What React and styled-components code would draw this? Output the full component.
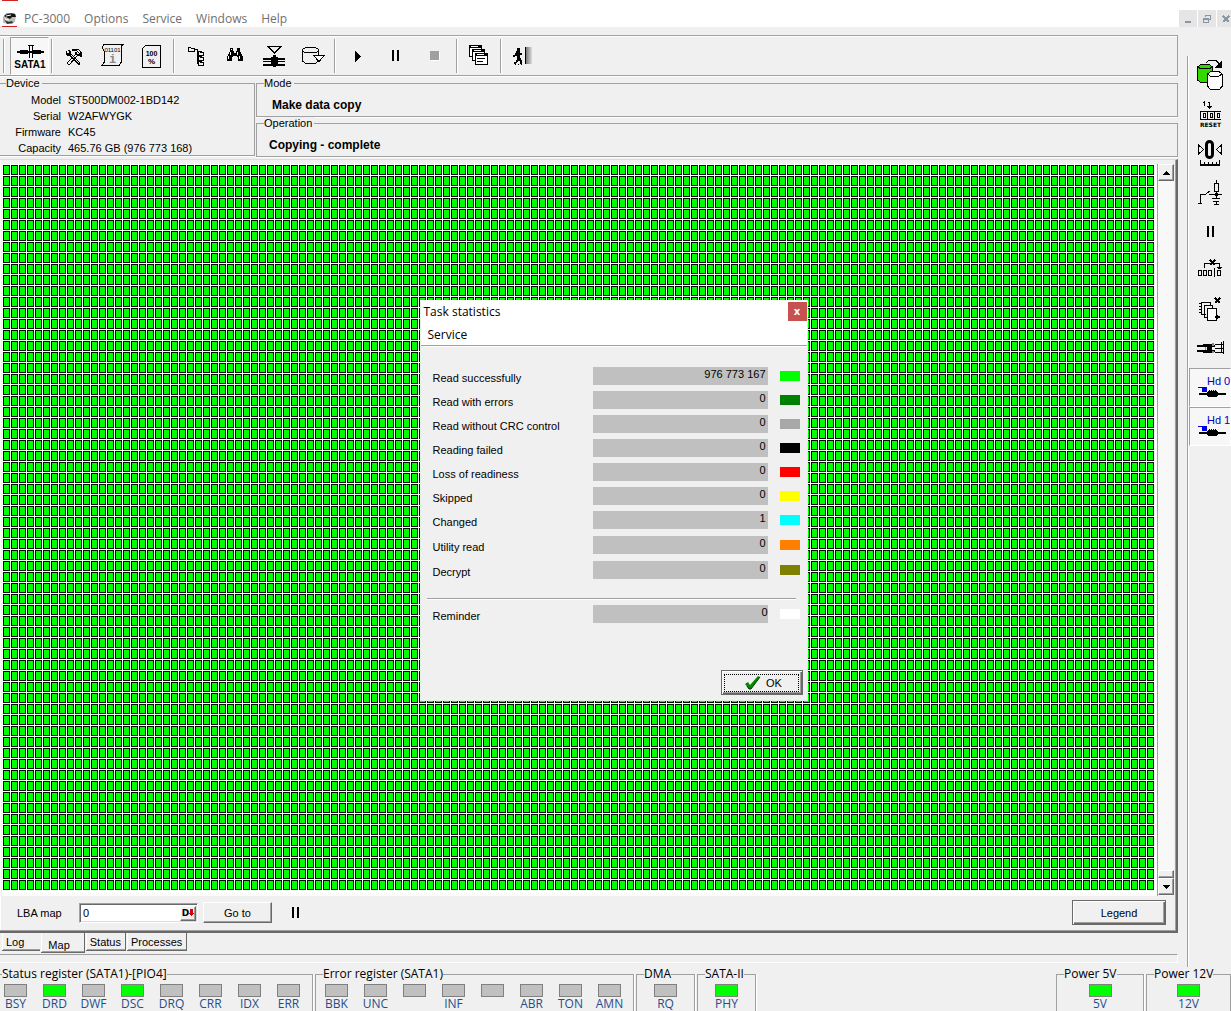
import React from 'react';
import styled, { createGlobalStyle, css } from 'styled-components';

const face = '#f0f0f0';
const shade = '#a0a0a0';
const dark = '#696969';
const sans = '"Liberation Sans", Arial, sans-serif';
const ui = '"Open Sans", "Noto Sans", sans-serif';

const GlobalStyle = createGlobalStyle`
  * { box-sizing: border-box; }
  html, body { margin: 0; padding: 0; background: ${face}; }
  body { font: 11px/16px ${sans}; color: #000; overflow: hidden; }
  button, input, fieldset, legend { font: inherit; color: inherit; margin: 0; padding: 0; border: 0; background: none; }
  button { cursor: default; }
`;

const Window = styled.div`
  position: relative;
  display: flex;
  flex-direction: column;
  height: 100vh;
  min-height: 760px;
  overflow: hidden;
  background: ${face};
`;

/* ---- menu bar ---- */
const MenuBar = styled.header`
  display: flex;
  align-items: flex-end;
  flex: none;
  height: 27px;
  padding-left: 2px;
  background: linear-gradient(#d42020, #d42020) 2px 0 / 16px 1px no-repeat #fff;
  overflow: hidden;
`;
const Menu = styled.nav`
  display: flex;
  flex: 1;
  gap: 14px;
  padding-left: 7px;
`;
const MenuItem = styled.button`
  font: 12px/17px ${ui};
  color: ${(p) => p.$color || '#707070'};
`;
const WindowButtons = styled.div`
  display: flex;
  gap: 1px;
  width: 52px;
  overflow: hidden;
`;
const WindowButton = styled.button`
  display: grid;
  place-items: center;
  flex: none;
  width: 18px;
  height: 17px;
  background: #e5e5e5;
`;

/* ---- body columns ---- */
const Body = styled.div`
  display: flex;
  flex: 1;
  min-height: 0;
`;
const Main = styled.main`
  display: flex;
  flex-direction: column;
  flex: 1;
  min-width: 0;
  padding-top: 8px;
`;

const Toolbar = styled.div`
  display: flex;
  align-items: center;
  flex: none;
  height: 41px;
  padding-left: 3px;
  border: solid ${shade};
  border-width: 1px 1px 1px 0;
  box-shadow: 0 1px 0 #fff, inset 0 1px 0 #fff;
`;
const Separator = styled.span`
  flex: none;
  width: 5px;
  height: 34px;
  background: linear-gradient(to right, transparent 2px, ${shade} 2px 3px, #fff 3px 4px, transparent 4px);
`;
const Grip = styled.span`
  width: 7px;
  height: 34px;
  border-left: 1px solid ${shade};
  box-shadow: inset 1px 0 0 #fff;
`;
const pressed = css`
  background: #f7f7f7;
  border: 1px solid #fff;
  border-top-color: ${shade};
  border-left-color: ${shade};
`;
const ToolButton = styled.button`
  display: flex;
  flex-direction: column;
  align-items: center;
  justify-content: center;
  flex: none;
  width: 39px;
  height: 38px;
  font: bold 10px/11px ${sans};
  ${(p) => p.$pressed && pressed}
  ${(p) => p.$pressed && 'padding: 4px 0 0 1px;'}
`;

/* ---- group boxes ---- */
const Info = styled.div`
  display: grid;
  grid-template-columns: 255px 1fr;
  column-gap: 1px;
  flex: none;
  height: 80px;
  margin-top: 1px;
`;
const InfoRight = styled.div`
  display: flex;
  flex-direction: column;
`;
const Group = styled.fieldset`
  min-width: 0;
  height: ${(p) => (p.$tall ? '79px' : '40px')};
  border: 1px solid ${shade};
  border-left-width: ${(p) => (p.$tall ? 0 : '1px')};
  box-shadow: inset 0 -1px 0 ${face}, 0 1px 0 #fff;
`;
const Legend = styled.legend`
  margin-left: ${(p) => (p.$inset ? '7px' : '6px')};
  padding-right: 2px;
  line-height: 12px;
  background: ${face};
`;
const Facts = styled.dl`
  display: grid;
  grid-template-columns: 61px 1fr;
  column-gap: 7px;
  margin: 3px 0 0;
  line-height: 16px;
  dt { text-align: right; }
  dd { margin: 0; }
`;
const Headline = styled.p`
  margin: 8px 0 0;
  padding-left: ${(p) => p.$indent}px;
  font-size: 12px;
  font-weight: bold;
  line-height: 16px;
`;

/* ---- map panel ---- */
const Panel = styled.section`
  display: flex;
  flex-direction: column;
  flex: 1;
  min-height: 0;
  margin-top: 2px;
  padding: 4px 2px 0 2px;
  border-top: 1px solid #dcdcdc;
  border-right: 2px solid ${dark};
  border-bottom: 2px solid ${dark};
  box-shadow: inset -1px -1px 0 ${shade}, inset 1px 0 0 #fff;
`;
const MapArea = styled.div`
  display: flex;
  flex: 1;
  min-height: 0;
  background: #fff;
`;
const Sectors = styled.div`
  flex: 1;
  margin: 1px 2px 5px 1px;
  background-color: #00ff00;
  background-size: 8px 11px;
  background-image:
    linear-gradient(to right, transparent 7px, #fff 7px),
    linear-gradient(to bottom, transparent 10px, #fff 10px),
    linear-gradient(to right, #001000 1px, transparent 1px 6px, #001000 6px),
    linear-gradient(to bottom, #001000 1px, transparent 1px 9px, #001000 9px);
`;
const ScrollBar = styled.div`
  display: flex;
  flex-direction: column;
  flex: none;
  width: 17px;
  border-left: 1px solid ${shade};
  background: #f8f8f8;
  padding-bottom: 1px;
`;
const raised = css`
  background: ${face};
  border: 1px solid;
  border-color: #fff ${dark} ${dark} #fff;
  box-shadow: inset -1px -1px 0 ${shade};
`;
const ScrollButton = styled.button`
  display: grid;
  place-items: center;
  height: 17px;
  ${raised}
`;
const Thumb = styled.span`
  height: 8px;
  margin-top: auto;
  ${raised}
`;
const Controls = styled.form`
  display: flex;
  align-items: center;
  flex: none;
  height: 35px;
  padding: 0 8px 2px 15px;
`;
const Label = styled.label`
  width: 62px;
`;
const AddressBox = styled.div`
  display: flex;
  width: 119px;
  height: 20px;
  margin-right: 5px;
  background: #fff;
  border: 1px solid ${shade};
  border-right-color: #fff;
  border-bottom-color: #fff;
  box-shadow: inset 1px 1px 0 ${dark}, inset -1px -1px 0 #dcdcdc;
`;
const AddressInput = styled.input`
  flex: 1;
  min-width: 0;
  padding-left: 3px;
  outline: 0;
`;
const BaseButton = styled.button`
  display: flex;
  align-items: center;
  justify-content: center;
  width: 16px;
  margin: 2px 1px 1px 0;
  font: bold 9px/12px "DejaVu Sans", sans-serif;
  ${raised}
`;
const PushButton = styled.button`
  display: flex;
  align-items: center;
  justify-content: center;
  gap: 4px;
  width: ${(p) => p.$width}px;
  height: ${(p) => (p.$default ? '25px' : '21px')};
  ${raised}
  ${(p) => p.$default && css`
    border-color: ${dark};
    box-shadow: inset 1px 1px 0 #fff, inset -1px -1px 0 ${dark}, inset -2px -2px 0 ${shade};
  `}
`;
const PauseButton = styled.button`
  display: grid;
  margin: 0 auto 0 10px;
`;
const FocusRing = styled.span`
  display: flex;
  align-items: center;
  justify-content: center;
  gap: 5px;
  width: 75px;
  height: 18px;
  padding-left: 3px;
  border: 1px dotted #000;
`;

/* ---- tabs ---- */
const Tabs = styled.div`
  display: flex;
  align-items: flex-start;
  gap: 1px;
  flex: none;
  height: 21px;
  padding-left: 2px;
`;
const Tab = styled.button`
  height: ${(p) => (p.$active ? '20px' : '18px')};
  padding: ${(p) => (p.$active ? '5px 14px 0 7px' : '2px 4px 0')};
  ${(p) => p.$first && 'padding: 2px 16px 0 4px;'}
  line-height: 15px;
  border: solid ${dark};
  border-width: 0 1px 1px 0;
  box-shadow: inset 1px 0 0 #fff, inset 0 -1px 0 ${shade};
  ${(p) => (p.$first) && 'border-right: 0;'}
`;
const Strip = styled.div`
  flex: none;
  height: 9px;
  margin-bottom: 4px;
  border: 1px solid #fff;
  border-left: 0;
  border-top-color: ${shade};
`;

/* ---- side tools ---- */
const SideBar = styled.aside`
  display: flex;
  flex-direction: column;
  flex: none;
  width: 44px;
  margin: 29px 0 0 9px;
  border-left: 1px solid ${shade};
  box-shadow: inset 1px 0 0 #fff;
  padding-left: 1px;
`;
const SideButton = styled.button`
  display: grid;
  place-items: center;
  height: 39px;
  padding-bottom: 1px;
  ${(p) => p.$pressed && pressed}
`;
const DriveButton = styled(SideButton)`
  align-content: center;
  justify-items: start;
  padding: 0 0 2px 8px;
  color: #0000c0;
  line-height: 10px;
  white-space: nowrap;
  span { padding-left: 9px; }
`;

/* ---- registers ---- */
const Registers = styled.footer`
  display: flex;
  gap: 2px;
  flex: none;
  height: 44px;
  font: 12px/14px ${ui};
`;
const Register = styled.fieldset`
  flex: none;
  min-width: 0;
  height: 44px;
  width: ${(p) => p.$width}px;
  margin-left: ${(p) => (p.$right ? 'auto' : 0)};
  border: 1px solid ${shade};
  border-bottom: 0;
  border-left-width: ${(p) => (p.$open ? 0 : '1px')};
  box-shadow: 1px 0 0 #fff;
`;
const RegisterName = styled.legend`
  margin-left: ${(p) => (p.$open ? '2px' : '7px')};
  background: ${face};
  line-height: 14px;
  white-space: nowrap;
`;
const Lamps = styled.ul`
  display: flex;
  justify-content: ${(p) => (p.$center ? 'center' : 'flex-start')};
  margin: 3px 0 0;
  padding: 0 0 0 ${(p) => (p.$open || p.$center ? 0 : '1px')};
  list-style: none;
`;
const Lamp = styled.li`
  display: flex;
  flex-direction: column;
  align-items: center;
  flex: none;
  width: 39px;
  padding-right: ${(p) => (p.$open ? '8px' : 0)};
  color: #1f4e8c;
  white-space: nowrap;
  &::before {
    content: '';
    flex: none;
    width: 21px;
    height: 11px;
    border: 1px solid #808080;
    background: ${(p) => (p.$on ? '#00ff00' : '#c0c0c0')};
  }
`;

/* ---- dialog ---- */
const Dialog = styled.section`
  position: absolute;
  left: calc(50% - 196px);
  top: 300px;
  width: 388px;
  height: 401px;
  background: ${face};
  border: 1px solid #dff5df;
  border-top: 0;
`;
const TitleBar = styled.div`
  display: flex;
  justify-content: space-between;
  height: 23px;
  padding: 2px 0 0 3px;
  background: #fff;
  font: 12px/19px ${ui};
`;
const CloseButton = styled.button`
  width: 19px;
  height: 19px;
  background: #c75050;
  color: #fff;
  font: bold 10px/16px "DejaVu Sans", sans-serif;
`;
const DialogMenu = styled.nav`
  height: 23px;
  padding: 3px 0 0 7px;
  background: #fff;
  border-bottom: 1px solid ${shade};
  box-shadow: 0 1px 0 #fff;
  line-height: 17px;
`;
const Stats = styled.dl`
  margin: 0;
  padding: ${(p) => (p.$last ? '5px' : '21px')} 0 0 12px;
`;
const Stat = styled.div`
  display: grid;
  grid-template-columns: 160px 175px 32px;
  height: ${(p) => (p.$tall ? '25px' : '24px')};
`;
const StatName = styled.dt`
  padding-top: 3px;
  line-height: 16px;
`;
const StatValue = styled.dd`
  height: 18px;
  margin: 0;
  padding-right: ${(p) => (p.$flush ? 0 : '2px')};
  background: #c0c0c0;
  line-height: 14px;
  text-align: right;
`;
const Swatch = styled.dd`
  width: 20px;
  height: 10px;
  margin: 4px 0 0 12px;
  background: ${(p) => p.$color};
`;
const Rule = styled.hr`
  height: 2px;
  margin: 12px 11px 0 6px;
  border: 0;
  border-top: 1px solid ${shade};
  border-bottom: 1px solid #fff;
`;
const DialogActions = styled.div`
  display: flex;
  justify-content: flex-end;
  padding: 41px 4px 0 0;
`;

/* ---- drawings ---- */
const Icon = ({ w = 26, h = 26, children, ...rest }) => (
  <svg width={w} height={h} viewBox={`0 0 ${w} ${h}`} fill="none" stroke="#000" strokeWidth="1" shapeRendering="crispEdges" aria-hidden="true" {...rest}>
    {children}
  </svg>
);
const Fill = ({ d, c = '#000' }) => <path d={d} fill={c} stroke="none" />;
const tiny = { fill: '#000', stroke: 'none', fontFamily: 'Liberation Sans, sans-serif', fontWeight: 'normal', textAnchor: 'middle' };

const Logo = () => (
  <svg width="15" height="15" viewBox="0 0 15 15" aria-hidden="true">
    <path d="M1 5 L4 1 H12 L14 3 L13 10 L10 12 L1 11Z" fill="#b9bdb9" />
    <path d="M2 4 Q6 0 13 2 L14 5 L10 5 L8 7 L4 5Z" fill="#151515" />
    <path d="M2 7 Q5 11 10 9 L11 11 L5 12Z" fill="#333" />
    <path d="M4 4 L9 3 M3 7 L7 8" stroke="#fff" />
    <path d="M0 14.5 H15" stroke="#d42020" />
  </svg>
);
const SataIcon = () => (
  <Icon w={27} h={14}>
    <Fill d="M0 6h27v2h-27zM3 5h8v4h-8zM16 5h8v4h-8z" />
    <path d="M12.5 1v12M15.5 1v12M11 .5h6" />
  </Icon>
);
const ToolsIcon = () => (
  <Icon viewBox="1 0 26 26">
    <path d="M10.500 10.500l10 10M9 11.500l9.500 9.500M18.500 21.500l2-1" />
    <path d="M15.500 11.500L7 20M17 13L9 22M7 20l2 2" />
    <Fill d="M6 8h1v2h2v-2h-1v-1h2v1h1v3h1v1h-1v1h-4v-1h-1z" />
    <path d="M12.500 6.500h6l3 3v3" />
    <path d="M13.500 7.500h3l3 3v2h2v-1" />
    <Fill d="M12 6h3v2h-3zM15 9h2v2h2v2h-2v-1h-2zM20 9h2v5h-2z" />
  </Icon>
);
const ScrollIcon = () => (
  <Icon viewBox="1 0 26 26">
    <path d="M5 1.500h19l-2 2v16l-2 3H3l2-3V8L3.500 5.500v-2z" />
    <text x="13.500" y="9" fontSize="6" {...tiny}>01101</text>
    <text x="13.500" y="20" fontSize="12" {...tiny} fontFamily="Liberation Mono, monospace" fontWeight="bold" fill="#888">i</text>
  </Icon>
);
const PercentIcon = () => (
  <Icon>
    <path d="M6 2.500h15.500v22H3.500v-19l3-3" />
    <text x="12.500" y="13" fontSize="7" {...tiny} fontWeight="bold">100</text>
    <text x="12.500" y="21" fontSize="8" {...tiny} fontWeight="bold">%</text>
  </Icon>
);
const TreeIcon = () => (
  <Icon>
    <path d="M5.500 8.500v-4h2l1 1h3v3zM11 6.500h3.500v14h1M14 11.500h1M14 15.500h1" />
    <path d="M15.500 12.500v-4h2l1 1h2v3zM15.500 17.500v-4h2l1 1h2v3zM15.500 22.500v-4h2l1 1h2v3z" strokeWidth="1.500" />
  </Icon>
);
const BinocularsIcon = () => (
  <Icon>
    <Fill d="M8 5h3v3h1v2h2V8h1V5h3v4h1v2h1v2h1v5h-5v-4h-1v-1h-4v1h-1v4H5v-5h1v-2h1V9h1z" />
    <Fill c="#fff" d="M8 9h1v3h-1zM6 13h1v3h-1zM15 9h1v3h-1zM17 13h1v3h-1zM9 6h1v1h-1z" />
  </Icon>
);
const FunnelIcon = () => (
  <Icon>
    <path d="M7 3.500h13L13.500 10z" />
    <Fill d="M2 15h22v2H2zM2 18h22v1H2zM2 21h22v2H2zM10 14h7v8h-7zM12 12h3v12h-3z" />
  </Icon>
);
const DatabaseIcon = () => (
  <Icon>
    <path d="M2.500 6.500l3-2h10l3 2v2l-3 1h-10l-3-1zM2.500 8v10l3 2.500h10l3-2.500M18.500 9v3" />
    <path d="M13.500 12.500h11l-5.500 6z" fill="#fff" />
  </Icon>
);
const PlayIcon = () => (
  <Icon><Fill d="M11 8h1v1h1v1h1v1h1v1h1v1h1v1h-1v1h-1v1h-1v1h-1v1h-1v1h-1z" /></Icon>
);
const PauseIcon = () => (
  <Icon w={7} h={11}><Fill d="M0 0h2v11h-2zM5 0h2v11h-2z" /></Icon>
);
const StopIcon = () => (
  <Icon w={10} h={10}><Fill c="#fff" d="M1 1h9v9h-9z" /><Fill c={shade} d="M0 0h9v9h-9z" /></Icon>
);
const WindowsIcon = () => (
  <Icon>
    {[[3, 2], [6, 6], [9, 10]].map(([x, y]) => (
      <g key={x}>
        <rect x={x + 0.5} y={y + 0.5} width="12" height="11" fill="#fff" />
        <Fill d={`M${x} ${y}h13v3h-13z`} />
        <Fill c="#fff" d={`M${x + 2} ${y + 1}h7v1h-7z`} />
      </g>
    ))}
    <path d="M11 15.500h8M11 18.500h6" />
  </Icon>
);
const ExitIcon = () => (
  <Icon>
    <defs>
      <linearGradient id="door"><stop offset="0" stopColor="#666" /><stop offset="1" stopColor="#ddd" /></linearGradient>
    </defs>
    <rect x="15" y="4" width="7" height="17" fill="url(#door)" stroke="none" />
    <path d="M15.500 4v17" />
    <Fill d="M7 5h3v3h-3zM6 8h4v2h2v2h-2v3h1v2h1v4h-2v-3h-2l-2 3H4v-2h2l1-3v-3H5v1H3v-2h2z" />
    <path d="M5 21.500h1M8 21.500h1M11 21.500h1" />
  </Icon>
);

const CopyDisksIcon = () => (
  <Icon w={30} h={32}>
    <path d="M2.500 8v13l3 2.500h9l3-2.500V8l-3-2.500h-9z" fill="#32d800" />
    <path d="M2.500 8l3 1.500h9l3-1.500" />
    <path d="M12.500 15v12l3 3.500h9l2.500-3V15l-3-2.500h-8z" fill="#fff" />
    <path d="M12.500 15l3 2.500h8l3.500-2.500M11 3.500l3-2h7l3 3" />
    <Fill d="M27 1v8h-8l3-3z" />
  </Icon>
);
const ResetIcon = () => (
  <Icon w={30} h={32}>
    <path d="M8 4.500h1.500v-2v5M13 4.500h1.500v6M12 8.500h5M13 9.500h3" />
    <path d="M26 13.500H5.500v8H26M12.500 13v8M19.500 13v8" />
    <rect x="8.500" y="15.500" width="2" height="4" /><rect x="15.500" y="15.500" width="2" height="4" /><rect x="22.500" y="15.500" width="2" height="4" />
    <text x="15.500" y="29" fontSize="6" {...tiny} fontFamily="DejaVu Sans, sans-serif" fontWeight="bold">RESET</text>
  </Icon>
);
const ZeroIcon = () => (
  <Icon w={30} h={32}>
    <path d="M3.500 8v9l5-4.500zM26.500 8v9l-5-4.500z" />
    <rect x="11.500" y="4.500" width="6" height="16" rx="3" strokeWidth="3" shapeRendering="auto" />
    <path d="M5 28.500h20M5.500 23v5M9.500 25v3M13.500 25v3M17.500 25v3M21.500 25v3M24.500 23v5" />
    <path d="M5 27.500h20" />
  </Icon>
);
const PowerIcon = () => (
  <Icon w={30} h={32}>
    <path d="M3 27.500h4M5.500 27v-9h5M11 18l4-3M14 18.500h13M21.500 4v3M21.500 15v7M17 22.500h8M18 25.500h6M21.500 25v4M19 28.500h5" />
    <rect x="19.500" y="7.500" width="4" height="8" />
    <Fill d="M20 17h3v3h-3z" />
  </Icon>
);
const SkipIcon = () => (
  <Icon w={30} h={32}>
    <path d="M9.500 14v-4.500h15v4M22 13.500h5M23 14.500h3M19.500 14v9" />
    <rect x="3.500" y="16.500" width="3" height="5" /><rect x="8.500" y="16.500" width="3" height="5" /><rect x="13.500" y="16.500" width="3" height="5" /><rect x="22.500" y="16.500" width="3" height="5" />
    <path d="M15 6l5 5M20 6l-5 5" strokeWidth="2" />
  </Icon>
);
const CopiesIcon = () => (
  <Icon w={30} h={32}>
    <path d="M6.500 9.500h9M6.500 9v12h4M9.500 12.500h8M9.500 12v12h3M15.500 9v3M17.500 12v3M4 10.500h3M4 13.500h3M4 16.500h3M4 19.500h3" />
    <rect x="12.500" y="15.500" width="9" height="12" fill="#fff" />
    <Fill d="M20 23h5v2h-5zM21 22h2v4h-2z" />
    <path d="M20 5l5 5M25 5l-5 5" strokeWidth="2" />
  </Icon>
);
const ConnectorIcon = () => (
  <Icon w={30} h={32}>
    <Fill d="M2 13h18v2H2zM2 18h18v2H2zM8 12h9v3H8zM12 13h5v7h-5zM8 18h9v3H8z" />
    <Fill c="#888" d="M10 15h1v3h-1zM17 11h2v3h-2zM17 19h2v2h-2z" />
    <path d="M20 12.500h8M20 16.500h8M20 20.500h8M28.500 9v13M26.500 10v11" />
  </Icon>
);
const DriveIcon = () => (
  <Icon w={28} h={12}>
    <Fill d="M1 7h27v2H1zM10 5h9v6h-9zM11 4h1v1h-1zM13 4h1v1h-1zM15 4h1v1h-1zM17 4h1v1h-1zM9 6h11v4H9z" />
    <Fill c="#0000e0" d="M4 1h5v5H4zM0 1h4v1H0z" />
  </Icon>
);
const Check = () => (
  <svg width="17" height="15" viewBox="0 0 17 15" aria-hidden="true">
    <path d="M1 9l3-2 2 3L14 1l2 1L7 14H5z" fill="#008a00" />
    <path d="M3 11l2 3h2L16 2" fill="none" stroke="#003c00" />
  </svg>
);

const toolGroups = [
  [['Utilities', ToolsIcon], ['Script', ScrollIcon], ['Progress', PercentIcon]],
  [['Tree', TreeIcon], ['Find', BinocularsIcon], ['Filter', FunnelIcon], ['Export', DatabaseIcon]],
  [['Start', PlayIcon], ['Pause', PauseIcon], ['Stop', StopIcon]],
  [['Cascade windows', WindowsIcon]],
  [['Exit', ExitIcon]],
];
const sideTools = [
  ['Copy disks', CopyDisksIcon], ['Reset', ResetIcon], ['Recalibrate', ZeroIcon], ['Power', PowerIcon],
  ['Pause', PauseIcon], ['Skip', SkipIcon], ['Copies', CopiesIcon], ['Connector', ConnectorIcon],
];
const stats = [
  ['Read successfully', '976 773 167', '#00ff00'],
  ['Read with errors', '0', '#008000'],
  ['Read without CRC control', '0', '#a8a8a8'],
  ['Reading failed', '0', '#000000'],
  ['Loss of readiness', '0', '#ff0000'],
  ['Skipped', '0', '#ffff00'],
  ['Changed', '1', '#00ffff', true],
  ['Utility read', '0', '#ff8000', true],
  ['Decrypt', '0', '#808000', true],
];
const registers = [
  { name: 'Status register (SATA1)-[PIO4]', width: 313, open: true, lamps: ['BSY', 'DRD', 'DWF', 'DSC', 'DRQ', 'CRR', 'IDX', 'ERR'], on: ['DRD', 'DSC'] },
  { name: 'Error register (SATA1)', width: 319, lamps: ['BBK', 'UNC', '', 'INF', '', 'ABR', 'TON', 'AMN'], on: [] },
  { name: 'DMA', width: 59, lamps: ['RQ'], on: [], center: true },
  { name: 'SATA-II', width: 59, lamps: ['PHY'], on: ['PHY'], center: true },
  { name: 'Power 5V', width: 88, lamps: ['5V'], on: ['5V'], center: true, right: true },
  { name: 'Power 12V', width: 85, lamps: ['12V'], on: ['12V'], center: true },
];

export default function App() {
  return (
    <Window>
      <GlobalStyle />
      <MenuBar>
        <Logo />
        <Menu>
          {['PC-3000', 'Options', 'Service', 'Windows', 'Help'].map((m) => <MenuItem key={m}>{m}</MenuItem>)}
        </Menu>
        <WindowButtons>
          <WindowButton aria-label="Minimize"><Icon w={10} h={10} stroke="#8797a5"><path d="M2 8h6" strokeWidth="2" /></Icon></WindowButton>
          <WindowButton aria-label="Restore"><Icon w={10} h={10} stroke="#8797a5"><path d="M3.500 3V1.500h5v4H7M3 1h6M1.500 4.500h5v4h-5zM1 5h6" /></Icon></WindowButton>
          <WindowButton aria-label="Close"><Icon w={10} h={10} stroke="#8797a5"><path d="M2 2l6 6M8 2L2 8" strokeWidth="2" /></Icon></WindowButton>
        </WindowButtons>
      </MenuBar>

      <Body>
        <Main>
          <Toolbar>
            <Grip />
            <ToolButton $pressed><SataIcon /><span>SATA1</span></ToolButton>
            {toolGroups.map((group, i) => (
              <React.Fragment key={i}>
                <Separator />
                {group.map(([name, Pic]) => <ToolButton key={name} aria-label={name}><Pic /></ToolButton>)}
              </React.Fragment>
            ))}
          </Toolbar>

          <Info>
            <Group $tall>
              <Legend>Device</Legend>
              <Facts>
                <dt>Model</dt><dd>ST500DM002-1BD142</dd>
                <dt>Serial</dt><dd>W2AFWYGK</dd>
                <dt>Firmware</dt><dd>KC45</dd>
                <dt>Capacity</dt><dd>465.76 GB (976 773 168)</dd>
              </Facts>
            </Group>
            <InfoRight>
              <Group>
                <Legend $inset>Mode</Legend>
                <Headline $indent={15}>Make data copy</Headline>
              </Group>
              <Group>
                <Legend $inset>Operation</Legend>
                <Headline $indent={12}>Copying - complete</Headline>
              </Group>
            </InfoRight>
          </Info>

          <Panel>
            <MapArea>
              <Sectors role="img" aria-label="Sector map" />
              <ScrollBar>
                <ScrollButton aria-label="Scroll up"><Icon w={7} h={4}><Fill d="M3 0h1v1h1v1h1v1h1v1H0V3h1V2h1V1h1z" /></Icon></ScrollButton>
                <Thumb />
                <ScrollButton aria-label="Scroll down"><Icon w={7} h={4}><Fill d="M0 0h7v1H6v1H5v1H4v1H3V3H2V2H1V1H0z" /></Icon></ScrollButton>
              </ScrollBar>
            </MapArea>
            <Controls onSubmit={(e) => e.preventDefault()}>
              <Label htmlFor="lba">LBA map</Label>
              <AddressBox>
                <AddressInput id="lba" defaultValue="0" />
                <BaseButton type="button">D<Icon w={5} h={8}><Fill c="#e00000" d="M1 0h3v4h1v1H4v1H3v1H2V6H1V5H0V4h1z" /></Icon></BaseButton>
              </AddressBox>
              <PushButton type="submit" $width={69}>Go to</PushButton>
              <PauseButton type="button" aria-label="Pause map"><Icon w={26} h={11}><Fill d="M10 0h2v11h-2zM15 0h2v11h-2z" /></Icon></PauseButton>
              <PushButton type="button" $width={94} $default>Legend</PushButton>
            </Controls>
          </Panel>
          <Tabs role="tablist">
            <Tab role="tab" $first>Log</Tab>
            <Tab role="tab" aria-selected="true" $active>Map</Tab>
            <Tab role="tab">Status</Tab>
            <Tab role="tab">Processes</Tab>
          </Tabs>
          <Strip />
        </Main>

        <SideBar>
          {sideTools.map(([name, Pic]) => <SideButton key={name} aria-label={name}><Pic /></SideButton>)}
          <DriveButton $pressed><span>Hd 0</span><DriveIcon /></DriveButton>
          <DriveButton $pressed><span>Hd 1</span><DriveIcon /></DriveButton>
        </SideBar>
      </Body>

      <Registers>
        {registers.map((r) => (
          <Register key={r.name} $width={r.width} $open={r.open} $right={r.right}>
            <RegisterName $open={r.open}>{r.name}</RegisterName>
            <Lamps $open={r.open} $center={r.center}>
              {r.lamps.map((l, i) => <Lamp key={i} $open={r.open} $on={r.on.includes(l)}>{l}</Lamp>)}
            </Lamps>
          </Register>
        ))}
      </Registers>

      <Dialog role="dialog" aria-label="Task statistics">
        <TitleBar>Task statistics<CloseButton aria-label="Close">x</CloseButton></TitleBar>
        <DialogMenu><MenuItem $color="#000">Service</MenuItem></DialogMenu>
        <Stats>
          {stats.map(([name, value, color, tall]) => (
            <Stat key={name} $tall={tall}>
              <StatName>{name}</StatName>
              <StatValue>{value}</StatValue>
              <Swatch $color={color} />
            </Stat>
          ))}
        </Stats>
        <Rule />
        <Stats $last>
          <Stat>
            <StatName>Reminder</StatName>
            <StatValue $flush>0</StatValue>
            <Swatch $color="#fff" />
          </Stat>
        </Stats>
        <DialogActions>
          <PushButton $width={82} $default><FocusRing><Check />OK</FocusRing></PushButton>
        </DialogActions>
      </Dialog>
    </Window>
  );
}
